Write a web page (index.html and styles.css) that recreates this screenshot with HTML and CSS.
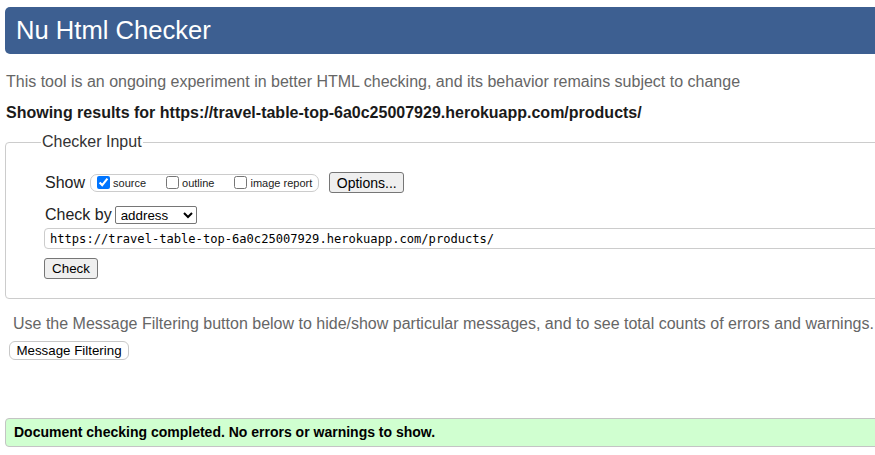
FILE: index.html
```html
<!DOCTYPE html>
<html lang="en">
<head>
<meta charset="utf-8">
<title>Nu Html Checker</title>
<link rel="stylesheet" href="styles.css">
</head>
<body>
<div class="page">
  <h1 class="title">Nu Html Checker</h1>
  <p class="intro">This tool is an ongoing experiment in better HTML checking, and its behavior remains subject to change</p>
  <p class="results">Showing results for https://travel-table-top-6a0c25007929.herokuapp.com/products/</p>
  <fieldset class="checker">
    <legend class="legend">Checker Input</legend>
    <div class="checker-body">
      <div class="row show-row">
        <span class="label">Show</span>
        <div class="opts">
          <label class="opt"><input type="checkbox" class="cb" checked><span>source</span></label>
          <label class="opt"><input type="checkbox" class="cb"><span>outline</span></label>
          <label class="opt"><input type="checkbox" class="cb"><span>image report</span></label>
        </div>
        <button class="btn options">Options...</button>
      </div>
      <div class="row by-row">
        <span class="label">Check by</span>
        <select class="select"><option>address</option></select>
      </div>
      <input class="url" type="text" value="https://travel-table-top-6a0c25007929.herokuapp.com/products/">
      <div class="submit-row"><button class="btn check">Check</button></div>
    </div>
  </fieldset>
  <p class="hint">Use the Message Filtering button below to hide/show particular messages, and to see total counts of errors and warnings.</p>
  <div class="filter-row"><button class="filter">Message Filtering</button></div>
  <div class="success">Document checking completed. No errors or warnings to show.</div>
</div>
</body>
</html>
```
FILE: styles.css
```css
html, body {
  margin: 0;
  padding: 0;
  overflow: hidden;
  background: #fff;
}
body {
  font-family: "Liberation Sans", Arial, sans-serif;
  font-size: 16px;
  color: #222;
}
.page {
  width: 1100px;
  padding: 7px 0 0 5px;
  display: flex;
  flex-direction: column;
  align-items: flex-start;
}
.title {
  margin: 0;
  align-self: stretch;
  height: 47px;
  line-height: 47px;
  padding-left: 11px;
  background: #3d5f91;
  color: #fff;
  font-weight: normal;
  font-size: 25.6px;
  border-radius: 5px;
}
.intro {
  margin: 18px 0 0 1px;
  line-height: 20px;
  color: #666;
}
.results {
  margin: 11px 0 0 1px;
  line-height: 20px;
  font-weight: bold;
  color: #1a1a1a;
}
.checker {
  margin: 9px 0 0 0;
  align-self: stretch;
  padding: 0;
  border: 1px solid #ccc;
  border-radius: 4px;
  min-width: 0;
}
.legend {
  margin-left: 35px;
  padding: 0 1px;
  line-height: 20px;
  color: #333;
}
.checker-body {
  padding: 20px 0 19px 38px;
  display: flex;
  flex-direction: column;
  align-items: flex-start;
}
.row {
  display: flex;
  align-items: center;
  height: 21px;
}
.label {
  line-height: 20px;
  padding-left: 1px;
}
.opts {
  display: flex;
  align-items: center;
  gap: 20px;
  margin-left: 5px;
  height: 16px;
  padding: 0 6px 0 6px;
  border: 1px solid #ccc;
  border-radius: 7px;
}
.opt {
  display: flex;
  align-items: center;
  gap: 3px;
  font-size: 11px;
}
.cb {
  margin: 0;
  width: 13px;
  height: 13px;
}
.btn {
  font-family: "Liberation Sans", Arial, sans-serif;
  background: #efefef;
  color: #000;
  border: 1px solid #767676;
  border-radius: 3px;
  padding: 0 6px;
}
.options {
  margin-left: 10px;
  height: 21px;
  font-size: 14px;
  width: 75px;
}
.by-row {
  margin-top: 12px;
  height: 20px;
  gap: 3px;
}
.select {
  width: 82px;
  height: 18px;
  font-family: "Liberation Sans", Arial, sans-serif;
  font-size: 13.33px;
  padding: 0 0 0 1px;
  border: 1px solid #767676;
  border-radius: 2px;
  background: #fff;
  color: #000;
}
.url {
  margin-top: 3px;
  width: 1000px;
  height: 21px;
  box-sizing: border-box;
  padding: 0 5px;
  border: 1px solid #ccc;
  border-radius: 4px;
  font-family: "DejaVu Sans Mono", "Liberation Mono", monospace;
  font-size: 12.1px;
  color: #000;
}
.submit-row {
  margin-top: 9px;
  display: flex;
}
.check {
  width: 54px;
  height: 21px;
  font-size: 13.33px;
}
.hint {
  margin: 15px 0 0 8px;
  line-height: 20px;
  color: #666;
  white-space: nowrap;
}
.filter-row {
  margin: 7px 0 0 4px;
  display: flex;
}
.filter {
  height: 19px;
  width: 120px;
  padding: 0;
  font-family: "Liberation Sans", Arial, sans-serif;
  font-size: 13.33px;
  color: #000;
  background: #fff;
  border: 1px solid #c8c8c8;
  border-radius: 6px;
}
.success {
  margin-top: 58px;
  align-self: stretch;
  height: 27px;
  line-height: 27px;
  padding-left: 8px;
  background: #d0ffd0;
  border: 1px solid #c4c4c4;
  border-radius: 4px;
  font-weight: bold;
  font-size: 14px;
  color: #000;
}
```
